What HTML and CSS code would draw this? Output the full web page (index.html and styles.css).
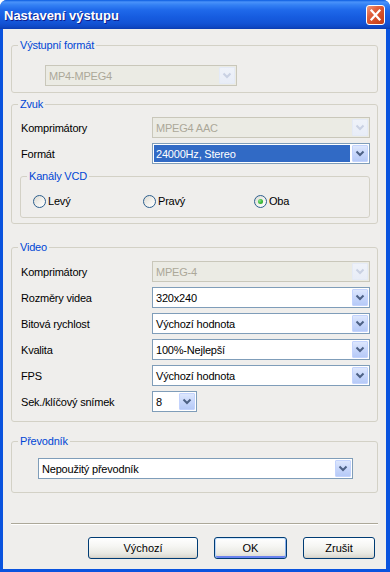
FILE: index.html
```html
<!DOCTYPE html>
<html lang="cs">
<head>
<meta charset="utf-8">
<title>Nastavení výstupu</title>
<link rel="stylesheet" href="styles.css">
</head>
<body>
<div class="window">
  <div class="titlebar">
    <span class="title">Nastavení výstupu</span>
    <span class="close"><svg width="17" height="18" viewBox="0 0 17 18"><path d="M4.5 4.5 L12.5 13.5 M12.5 4.5 L4.5 13.5" stroke="#fff" stroke-width="2.2" stroke-linecap="square" fill="none"/></svg></span>
  </div>
  <div class="client">
    <fieldset class="group g-format">
      <legend>Výstupní formát</legend>
      <div class="gbody">
        <div class="combo disabled w-format"><span class="val">MP4-MPEG4</span><span class="arrow"><svg width="14" height="17" viewBox="0 0 14 17"><polyline points="3.5,6.5 7,10 10.5,6.5" fill="none" stroke-width="2"/></svg></span></div>
      </div>
    </fieldset>

    <fieldset class="group g-audio">
      <legend>Zvuk</legend>
      <div class="gbody rows">
        <div class="row"><span class="lbl">Komprimátory</span><div class="combo disabled"><span class="val">MPEG4 AAC</span><span class="arrow"><svg width="14" height="17" viewBox="0 0 14 17"><polyline points="3.5,6.5 7,10 10.5,6.5" fill="none" stroke-width="2"/></svg></span></div></div>
        <div class="row"><span class="lbl">Formát</span><div class="combo focused"><span class="val">24000Hz, Stereo</span><span class="arrow"><svg width="14" height="17" viewBox="0 0 14 17"><polyline points="3.5,6.5 7,10 10.5,6.5" fill="none" stroke-width="2"/></svg></span></div></div>
        <fieldset class="group sub">
          <legend>Kanály VCD</legend>
          <div class="gbody radios">
            <label class="radio"><span class="dot"></span>Levý</label>
            <label class="radio"><span class="dot"></span>Pravý</label>
            <label class="radio checked"><span class="dot"></span>Oba</label>
          </div>
        </fieldset>
      </div>
    </fieldset>

    <fieldset class="group g-video">
      <legend>Video</legend>
      <div class="gbody rows">
        <div class="row"><span class="lbl">Komprimátory</span><div class="combo disabled"><span class="val">MPEG-4</span><span class="arrow"><svg width="14" height="17" viewBox="0 0 14 17"><polyline points="3.5,6.5 7,10 10.5,6.5" fill="none" stroke-width="2"/></svg></span></div></div>
        <div class="row"><span class="lbl">Rozměry videa</span><div class="combo"><span class="val">320x240</span><span class="arrow"><svg width="14" height="17" viewBox="0 0 14 17"><polyline points="3.5,6.5 7,10 10.5,6.5" fill="none" stroke-width="2"/></svg></span></div></div>
        <div class="row"><span class="lbl">Bitová rychlost</span><div class="combo"><span class="val">Výchozí hodnota</span><span class="arrow"><svg width="14" height="17" viewBox="0 0 14 17"><polyline points="3.5,6.5 7,10 10.5,6.5" fill="none" stroke-width="2"/></svg></span></div></div>
        <div class="row"><span class="lbl">Kvalita</span><div class="combo"><span class="val">100%-Nejlepší</span><span class="arrow"><svg width="14" height="17" viewBox="0 0 14 17"><polyline points="3.5,6.5 7,10 10.5,6.5" fill="none" stroke-width="2"/></svg></span></div></div>
        <div class="row"><span class="lbl">FPS</span><div class="combo"><span class="val">Výchozí hodnota</span><span class="arrow"><svg width="14" height="17" viewBox="0 0 14 17"><polyline points="3.5,6.5 7,10 10.5,6.5" fill="none" stroke-width="2"/></svg></span></div></div>
        <div class="row"><span class="lbl">Sek./klíčový snímek</span><div class="combo small"><span class="val">8</span><span class="arrow"><svg width="14" height="17" viewBox="0 0 14 17"><polyline points="3.5,6.5 7,10 10.5,6.5" fill="none" stroke-width="2"/></svg></span></div></div>
      </div>
    </fieldset>

    <fieldset class="group g-conv">
      <legend>Převodník</legend>
      <div class="gbody">
        <div class="combo"><span class="val">Nepoužitý převodník</span><span class="arrow"><svg width="14" height="17" viewBox="0 0 14 17"><polyline points="3.5,6.5 7,10 10.5,6.5" fill="none" stroke-width="2"/></svg></span></div>
      </div>
    </fieldset>

    <div class="sep"></div>

    <div class="buttons">
      <button class="btn b-default">Výchozí</button>
      <button class="btn b-ok">OK</button>
      <button class="btn b-cancel">Zrušit</button>
    </div>
  </div>
</div>
</body>
</html>
```
FILE: styles.css
```css
* { box-sizing: border-box; }
html, body { margin: 0; padding: 0; background: #fff; }
body {
  font-family: "Liberation Sans", Arial, sans-serif;
  font-size: 11px;
  color: #000;
  letter-spacing: -0.2px;
}
.window {
  width: 390px;
  height: 572px;
  display: flex;
  flex-direction: column;
  background: #0A53DE;
  border-radius: 7px 7px 0 0;
  overflow: hidden;
}
.titlebar {
  height: 29px;
  flex: none;
  display: flex;
  align-items: center;
  justify-content: space-between;
  padding: 0 5px 0 4px;
  background: linear-gradient(to bottom,
    #0A5BE0 0px, #4A93FA 2px, #3380F4 5px, #1F69EA 10px,
    #165CE0 17px, #1354D6 23px, #0F48C4 27px, #0B3CB0 29px);
}
.title {
  font-size: 13px;
  font-weight: bold;
  color: #fff;
  letter-spacing: 0;
  text-shadow: 1px 1px 0 #0F1C8A;
  margin-top: 1px;
}
.close {
  width: 19px;
  height: 20px;
  border: 1px solid #fff;
  border-radius: 3px;
  background: linear-gradient(135deg, #F09A80 0%, #E0603D 35%, #D24A23 70%, #C03E18 100%);
  display: flex;
  align-items: center;
  justify-content: center;
  margin-top: 1px;
}
.client {
  flex: 1;
  margin: 0 4px 3px 3px;
  background: #EFEEEC;
  padding: 0 8px;
  display: flex;
  flex-direction: column;
}
fieldset.group {
  margin: 0;
  padding: 0;
  border: 1px solid #D3D1C6;
  border-radius: 3px;
  min-width: 0;
}
legend {
  margin-left: 6px;
  padding: 0 2px;
  line-height: 15px;
  color: #0046D5;
}
fieldset.g-format { margin-top: 9px; }
.g-format .gbody { padding: 12px 0 6px 33px; }
.w-format { width: 192px; }

fieldset.g-audio { margin-top: 4px; }
.g-audio .gbody { padding: 5px 7px 5px 9px; }
.rows { display: flex; flex-direction: column; gap: 5px; }
.row {
  display: grid;
  grid-template-columns: 1fr 218px;
  align-items: center;
  height: 21px;
}
.lbl { white-space: nowrap; }

fieldset.sub { margin: 0 0 0 -1px; }
.sub .gbody {
  display: grid;
  grid-template-columns: 110px 111px auto;
  padding: 9px 0 8px 12px;
}
.radio {
  display: flex;
  align-items: center;
  gap: 2px;
  height: 16px;
}
.dot {
  width: 13px;
  height: 13px;
  border-radius: 50%;
  border: 1px solid #2C5F8E;
  background: linear-gradient(135deg, #DCDAD2 0%, #F3F2EE 55%, #FFFFFF 100%);
  display: flex;
  align-items: center;
  justify-content: center;
}
.checked .dot::after {
  content: "";
  width: 5px;
  height: 5px;
  border-radius: 50%;
  background: radial-gradient(circle at 35% 35%, #8AE68A 0%, #3DBA3D 50%, #1F9A1F 100%);
}

fieldset.g-video { margin-top: 16px; }
.g-video .gbody { padding: 6px 7px 9px 9px; }

fieldset.g-conv { margin-top: 12px; }
.g-conv .gbody { padding: 9px 24px 13px 26px; }

.combo {
  height: 21px;
  border: 1px solid #7F9DB9;
  background: #fff;
  display: flex;
  align-items: stretch;
}
.combo .val {
  flex: 1;
  display: flex;
  align-items: center;
  padding-left: 3px;
  white-space: nowrap;
  overflow: hidden;
}
.combo .arrow {
  width: 16px;
  margin: 1px;
  border: 1px solid #C3D3FD;
  border-radius: 1px;
  background: linear-gradient(to bottom, #DDE7FD 0%, #C8D7FB 50%, #B6CAF7 100%);
  display: flex;
  align-items: center;
  justify-content: center;
}
.combo .arrow svg { stroke: #4D6185; }
.combo.small { width: 45px; justify-self: start; }
.combo.focused .val {
  margin: 1px;
  padding-left: 2px;
  background: #316AC5;
  color: #fff;
}
.combo.disabled {
  border-color: #C9C7BA;
  background: #EBEBE4;
  color: #ACA899;
}
.combo.disabled .arrow {
  border-color: #E4EAF6;
  background: linear-gradient(to bottom, #EFF2F9 0%, #E8EDF7 100%);
}
.combo.disabled .arrow svg { stroke: #C9D1E3; }

.sep {
  margin-top: 30px;
  height: 2px;
  border-top: 1px solid #ACA899;
  border-bottom: 1px solid #FFFFFF;
}
.buttons {
  margin-top: 12px;
  display: flex;
  justify-content: flex-end;
  gap: 16px;
  padding-right: 3px;
}
.btn {
  height: 22px;
  padding: 0;
  font: inherit;
  color: #000;
  border: 1px solid #003C74;
  border-radius: 3px;
  background: linear-gradient(to bottom, #FFFFFF 0%, #F6F6F3 40%, #EAEAE4 75%, #D8D6CE 100%);
  box-shadow: inset 0 -1px 0 #D6D0C5;
}
.b-default { width: 110px; }
.b-ok {
  width: 73px;
  box-shadow: inset 0 1px 0 #CEE7FF, inset 1px 0 0 #B8D4F8, inset -1px 0 0 #8BB0EE, inset 0 -2px 0 #6982EE;
}
.b-cancel { width: 72px; }
```
